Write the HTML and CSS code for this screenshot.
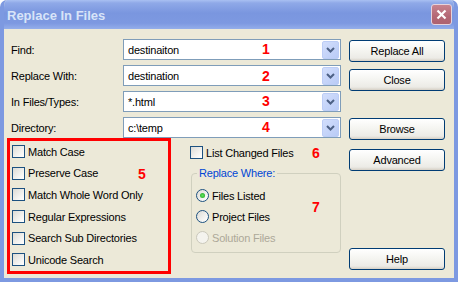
FILE: index.html
```html
<!DOCTYPE html>
<html lang="en">
<head>
    <meta charset="UTF-8">
    <title>Replace In Files</title>
    <link rel="stylesheet" href="styles.css">
</head>
<body>
    <div class="window">
        <div class="titlebar">
            <span class="title">Replace In Files</span>
            <span class="close-btn">
                <svg width="11" height="11" viewBox="0 0 11 11"><path d="M1.5 1.5 L9.5 9.5 M9.5 1.5 L1.5 9.5" stroke="#fff" stroke-width="2.2" fill="none"/></svg>
            </span>
        </div>
        <div class="dialog">
            <div class="main">
                <div class="fields">
                    <label>Find:</label>
                    <div class="combo"><span class="value">destinaiton</span><span class="drop"><svg width="9" height="6" viewBox="0 0 9 6"><path d="M1 1 L4.5 4.5 L8 1" stroke="#4d6185" stroke-width="2" fill="none"/></svg></span></div>
                    <label>Replace With:</label>
                    <div class="combo"><span class="value">destination</span><span class="drop"><svg width="9" height="6" viewBox="0 0 9 6"><path d="M1 1 L4.5 4.5 L8 1" stroke="#4d6185" stroke-width="2" fill="none"/></svg></span></div>
                    <label>In Files/Types:</label>
                    <div class="combo"><span class="value">*.html</span><span class="drop"><svg width="9" height="6" viewBox="0 0 9 6"><path d="M1 1 L4.5 4.5 L8 1" stroke="#4d6185" stroke-width="2" fill="none"/></svg></span></div>
                    <label>Directory:</label>
                    <div class="combo"><span class="value">c:\temp</span><span class="drop"><svg width="9" height="6" viewBox="0 0 9 6"><path d="M1 1 L4.5 4.5 L8 1" stroke="#4d6185" stroke-width="2" fill="none"/></svg></span></div>
                </div>
                <div class="options">
                    <div class="flags">
                        <div class="check"><span class="box"></span>Match Case</div>
                        <div class="check"><span class="box"></span>Preserve Case</div>
                        <div class="check"><span class="box"></span>Match Whole Word Only</div>
                        <div class="check"><span class="box"></span>Regular Expressions</div>
                        <div class="check"><span class="box"></span>Search Sub Directories</div>
                        <div class="check"><span class="box"></span>Unicode Search</div>
                    </div>
                    <div class="side">
                        <div class="check list-changed"><span class="box"></span>List Changed Files</div>
                        <fieldset class="where">
                            <legend>Replace Where:</legend>
                            <div class="radio"><span class="dot checked"></span>Files Listed</div>
                            <div class="radio"><span class="dot"></span>Project Files</div>
                            <div class="radio disabled"><span class="dot"></span>Solution Files</div>
                        </fieldset>
                    </div>
                </div>
            </div>
            <div class="buttons">
                <button class="btn">Replace All</button>
                <button class="btn close">Close</button>
                <button class="btn browse">Browse</button>
                <button class="btn advanced">Advanced</button>
                <button class="btn help">Help</button>
            </div>

            <span class="note n1">1</span>
            <span class="note n2">2</span>
            <span class="note n3">3</span>
            <span class="note n4">4</span>
            <span class="note n5">5</span>
            <span class="note n6">6</span>
            <span class="note n7">7</span>
        </div>
    </div>
</body>
</html>
```

FILE: styles.css
```css
body {
    margin: 0;
    background-color: #fff;
    font-family: "Liberation Sans", Arial, sans-serif;
    font-size: 11px;
    letter-spacing: -0.2px;
    color: #000;
}
.window {
    width: 458px;
    height: 282px;
    box-sizing: border-box;
    background-color: #ece9d8;
    border: 4px solid #7d99e1;
    border-top: none;
    border-radius: 7px 7px 0 0;
    overflow: hidden;
}
.titlebar {
    height: 29px;
    margin: 0 -4px;
    display: flex;
    align-items: center;
    justify-content: space-between;
    padding: 0 5px 0 7px;
    background: linear-gradient(#a9c0f2 0, #8fa9e8 3px, #7a96df 45%, #7d99e1 80%, #94aeea 100%);
}
.title {
    font-size: 13px;
    font-weight: bold;
    letter-spacing: 0;
    color: #d8e4f8;
    padding-top: 1px;
}
.close-btn {
    width: 19px;
    height: 19px;
    border: 1px solid #e6d3dc;
    border-radius: 3px;
    background: linear-gradient(#c7838f, #b46875 60%, #ad6270);
    display: flex;
    align-items: center;
    justify-content: center;
    margin-right: 1px;
}
.dialog {
    position: relative;
    display: flex;
}
.main {
    width: 337px;
}
.fields {
    display: grid;
    grid-template-columns: 112px 218px;
    grid-auto-rows: 21px;
    row-gap: 5px;
    padding: 10px 0 0 7px;
    align-items: center;
}
.combo {
    height: 21px;
    box-sizing: border-box;
    border: 1px solid #7f9db9;
    background-color: #fff;
    display: flex;
    align-items: center;
    justify-content: space-between;
    padding: 0 1px 0 4px;
}
.drop {
    width: 15px;
    height: 16px;
    border: 1px solid #bccdf6;
    border-radius: 2px;
    background: linear-gradient(135deg, #d2defc, #b9cbf6);
    display: flex;
    align-items: center;
    justify-content: center;
}
.options {
    display: flex;
}
.flags {
    margin-left: 3px;
    width: 166px;
    height: 136px;
    box-sizing: border-box;
    border: 3px solid #ff0000;
    padding-left: 2px;
}
.check, .radio {
    display: flex;
    align-items: center;
    gap: 3px;
    height: 21.6px;
    white-space: nowrap;
}
.box {
    width: 11px;
    height: 11px;
    border: 1px solid #1c5180;
    background: linear-gradient(135deg, #dcdbd5, #f6f6f4 70%, #fff);
}
.side {
    margin-left: 19px;
    padding-top: 8px;
}
.list-changed {
    height: 13px;
}
.where {
    margin: 8px 0 0 1px;
    width: 150px;
    box-sizing: border-box;
    padding: 5px 0 4px 4px;
    border: 1px solid #d0d0bf;
    border-radius: 4px;
}
.where legend {
    padding: 0 2px;
    margin-left: 1px;
    line-height: 13px;
    color: #0046d5;
}
.radio {
    height: 21px;
}
.dot {
    width: 11px;
    height: 11px;
    border: 1px solid #1c5180;
    border-radius: 50%;
    background: linear-gradient(135deg, #dcdbd5, #f6f6f4 70%, #fff);
    display: flex;
    align-items: center;
    justify-content: center;
}
.dot.checked::after {
    content: "";
    width: 5px;
    height: 5px;
    border-radius: 50%;
    background: radial-gradient(#5ee35e, #21a121);
}
.radio.disabled {
    color: #aca899;
}
.radio.disabled .dot {
    border-color: #cac8bb;
    background: #f4f3ee;
}
.buttons {
    margin-left: 8px;
    width: 96px;
    padding-top: 11px;
    display: flex;
    flex-direction: column;
}
.btn {
    height: 22px;
    padding: 0;
    font-family: inherit;
    font-size: 11px;
    letter-spacing: -0.2px;
    color: #000;
    border: 1px solid #003c74;
    border-radius: 3px;
    background: linear-gradient(#fff, #f4f4f0 50%, #ecebe6 85%, #d6d0c5);
}
.close {
    margin-top: 7px;
}
.browse {
    margin-top: 27px;
}
.advanced {
    margin-top: 9px;
}
.help {
    margin-top: 77px;
}
.note {
    position: absolute;
    font-size: 14px;
    line-height: 14px;
    font-weight: bold;
    color: #f00;
    letter-spacing: 0;
}
.n1 { left: 258px; top: 13px; }
.n2 { left: 258px; top: 40px; }
.n3 { left: 258px; top: 65px; }
.n4 { left: 258px; top: 91px; }
.n5 { left: 134px; top: 138px; }
.n6 { left: 308px; top: 117px; }
.n7 { left: 308px; top: 171px; }
```
